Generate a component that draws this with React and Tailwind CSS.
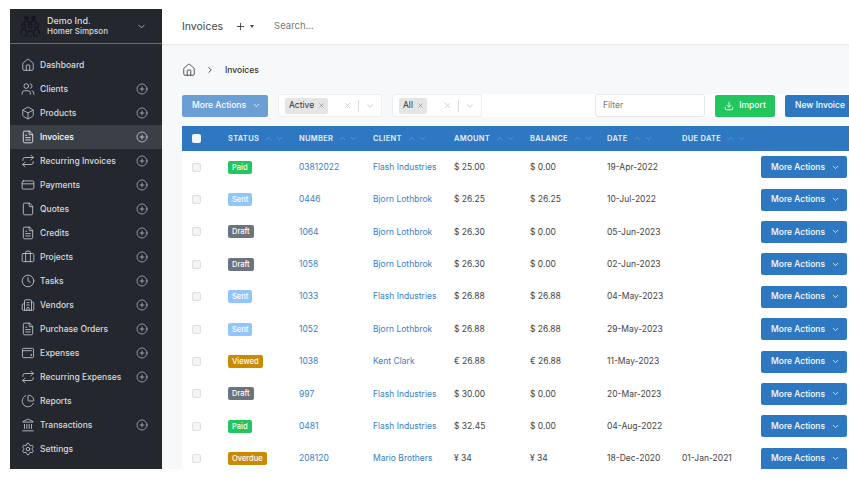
import React from "react";
import {
  House, Users, Box, FileText, Repeat, CreditCard, File, Briefcase, Clock, Building2,
  ChartPie, Landmark, Settings, CirclePlus, ChevronDown, ChevronUp, ChevronRight, Plus, X, Download,
} from "lucide-react";

function WalletIcon(props) {
  const { size, strokeWidth, className } = props;
  return (
    <svg width={size} height={size} viewBox="0 0 24 24" fill="none" stroke="currentColor" strokeWidth={strokeWidth} className={className}>
      <rect x="2.500" y="4" width="19" height="16" rx="2" />
      <path d="M2.500 8h16" />
      <circle cx="17.500" cy="15.500" r="0.8" fill="currentColor" />
    </svg>
  );
}

const NAV = [
  { label: "Dashboard", icon: House },
  { label: "Clients", icon: Users, add: true },
  { label: "Products", icon: Box, add: true },
  { label: "Invoices", icon: FileText, add: true, active: true },
  { label: "Recurring Invoices", icon: Repeat, add: true },
  { label: "Payments", icon: CreditCard, add: true },
  { label: "Quotes", icon: File, add: true },
  { label: "Credits", icon: FileText, add: true },
  { label: "Projects", icon: Briefcase, add: true },
  { label: "Tasks", icon: Clock, add: true },
  { label: "Vendors", icon: Building2, add: true },
  { label: "Purchase Orders", icon: FileText, add: true },
  { label: "Expenses", icon: WalletIcon, add: true },
  { label: "Recurring Expenses", icon: Repeat, add: true },
  { label: "Reports", icon: ChartPie },
  { label: "Transactions", icon: Landmark, add: true },
  { label: "Settings", icon: Settings },
];

const ROWS = [
  ["Paid", "03812022", "Flash Industries", "$ 25.00", "$ 0.00", "19-Apr-2022", ""],
  ["Sent", "0446", "Bjorn Lothbrok", "$ 26.25", "$ 26.25", "10-Jul-2022", ""],
  ["Draft", "1064", "Bjorn Lothbrok", "$ 26.30", "$ 0.00", "05-Jun-2023", ""],
  ["Draft", "1058", "Bjorn Lothbrok", "$ 26.30", "$ 0.00", "02-Jun-2023", ""],
  ["Sent", "1033", "Flash Industries", "$ 26.88", "$ 26.88", "04-May-2023", ""],
  ["Sent", "1052", "Bjorn Lothbrok", "$ 26.88", "$ 26.88", "29-May-2023", ""],
  ["Viewed", "1038", "Kent Clark", "€ 26.88", "€ 26.88", "11-May-2023", ""],
  ["Draft", "997", "Flash Industries", "$ 30.00", "$ 0.00", "20-Mar-2023", ""],
  ["Paid", "0481", "Flash Industries", "$ 32.45", "$ 0.00", "04-Aug-2022", ""],
  ["Overdue", "208120", "Mario Brothers", "¥ 34", "¥ 34", "18-Dec-2020", "01-Jan-2021"],
];

const STATUS = {
  Paid: "bg-[#22c55e]",
  Sent: "bg-[#93c5fd]",
  Draft: "bg-[#6b7280]",
  Viewed: "bg-[#ca8a04]",
  Overdue: "bg-[#ca8a04]",
};

const COLS = "grid grid-cols-[46px_71px_74px_81px_76px_77px_75px_79px_1fr] items-center";

function Logo() {
  return (
    <svg width="20" height="22" viewBox="0 0 20 22" fill="none" stroke="#15171a" className="shrink-0">
      <circle cx="6.500" cy="3" r="2" fill="#15171a" />
      <circle cx="13.500" cy="3" r="2" fill="#15171a" />
      <path d="M3.500 10c0-2.500 1.500-4 3-4s3 1.500 3.500 3c.5-1.500 2-3 3.500-3s3 1.500 3 4" strokeWidth="1.600" />
      <circle cx="3.500" cy="10.500" r="2" strokeWidth="1.200" />
      <circle cx="10" cy="11" r="2" strokeWidth="1.200" />
      <circle cx="16.500" cy="10.500" r="2" strokeWidth="1.200" />
      <path d="M.5 19c0-3 1.500-5 3-5s2.500 1 3 2.500M19.500 19c0-3-1.500-5-3-5s-2.500 1-3 2.500M6 21c0-3 2-5 4-5s4 2 4 5" strokeWidth="1.400" />
      <path d="M1 21h18" strokeWidth="1" strokeDasharray="2 1" />
    </svg>
  );
}

function Sidebar() {
  return (
    <aside className="w-[152px] shrink-0 bg-[#24272e] text-[#d9dbde] flex flex-col">
      <div className="h-[35px] shrink-0 flex items-center pl-[10px] pr-[15px] border-b border-[#6a6d72]">
        <Logo />
        <div className="ml-[7px] flex-1 text-[8px] leading-[10.500px] font-medium">
          <div className="text-[9px]">Demo Ind.</div>
          <div>Homer Simpson</div>
        </div>
        <ChevronDown size={11} strokeWidth={1.5} />
      </div>
      <nav className="mt-[9px]">
        {NAV.map(({ label, icon: Icon, add, active }) => (
          <div key={label} className={`h-[24px] flex items-center pl-[11px] pr-[14px] ${active ? "bg-[#3b4047] text-white" : ""}`}>
            <Icon size={14} strokeWidth={1.3} className="shrink-0" />
            <span className="ml-[5px] flex-1 text-[8.500px] font-medium whitespace-nowrap">{label}</span>
            {add && <CirclePlus size={12} strokeWidth={1.2} className="shrink-0" />}
          </div>
        ))}
      </nav>
    </aside>
  );
}

function MoreActions({ dim }) {
  return (
    <div className={`h-[22px] w-[86px] shrink-0 rounded-[2px] flex items-center pl-[10px] gap-[6px] text-white text-[8.500px] font-medium ${dim ? "bg-[#6c9ed6]" : "bg-[#2e78c2]"}`}>
      More Actions <ChevronDown size={9} />
    </div>
  );
}

function Pill({ label, width }) {
  return (
    <div className={`h-[23px] shrink-0 bg-white border border-[#eceef0] rounded-[3px] flex items-center pl-[6px] ${width}`}>
      <span className="h-[16px] pl-[4px] pr-[3px] bg-[#e5e5e5] rounded-[2px] flex items-center gap-[4px] text-[8.500px] text-[#333]">
        {label} <X size={7} className="text-[#777]" />
      </span>
      <span className="ml-auto flex items-center text-[#c4c4c4]">
        <X size={9} />
        <span className="mx-[6px] h-[12px] w-px bg-[#dcdcdc]" />
        <ChevronDown size={10} className="mr-[6px]" />
      </span>
    </div>
  );
}

function SortHead({ label }) {
  return (
    <div className="flex items-center gap-[2px] text-[7.500px] tracking-[0.3px] font-semibold text-[#e9f0f8] whitespace-nowrap">
      {label}
      <ChevronUp size={9} className="ml-[3px] text-[#6fa3da]" />
      <ChevronDown size={9} className="text-[#6fa3da]" />
    </div>
  );
}

export default function App() {
  return (
    <div className="w-[849px] h-[484px] overflow-hidden bg-white pl-[10px] pt-[9px] font-['Inter',sans-serif]">
      <div className="flex h-[460px]">
        <Sidebar />
        <main className="flex-1 min-w-0 bg-[#f7f8f9] flex flex-col overflow-hidden">
          <header className="h-[35px] shrink-0 bg-white flex items-center pl-[20px] shadow-[0_1px_2px_rgba(0,0,0,0.08)] text-[#444]">
            <span className="text-[10.500px]">Invoices</span>
            <Plus size={11} strokeWidth={2} className="ml-[12px]" />
            <span className="ml-[4px] border-x-[2.500px] border-t-[3px] border-x-transparent border-t-[#444]" />
            <span className="ml-[20px] text-[9.500px] text-[#777]">Search...</span>
          </header>
          <div className="pl-[20px] mt-[17px] h-[18px] shrink-0 flex items-center text-[#333]">
            <House size={14} strokeWidth={1.4} />
            <ChevronRight size={10} className="ml-[9px]" />
            <span className="ml-[10px] text-[8.500px] font-medium">Invoices</span>
          </div>
          <div className="pl-[20px] mt-[15px] h-[23px] shrink-0 flex items-center">
            <MoreActions dim />
            <Pill label="Active" width="w-[104px] ml-[10px]" />
            <Pill label="All" width="w-[90px] ml-[10px]" />
            <div className="h-[23px] flex-1 bg-white flex items-center pl-[113px]">
              <div className="h-[23px] w-[110px] shrink-0 border border-[#e5e7eb] rounded-[3px] px-[7px] flex items-center text-[8.500px] text-[#777] bg-white">Filter</div>
              <div className="ml-[10px] h-[22px] w-[60px] shrink-0 bg-[#22c55e] rounded-[2px] text-white text-[8.500px] font-medium flex items-center justify-center gap-[5px]">
                <Download size={10} /> Import
              </div>
              <div className="ml-[10px] h-[22px] w-[70px] shrink-0 bg-[#2e78c2] rounded-[2px] text-white text-[8.500px] font-medium flex items-center justify-center">New Invoice</div>
            </div>
          </div>
          <div className="ml-[20px] mt-[9px] bg-white flex-1 min-h-0 overflow-hidden">
            <div className={`${COLS} h-[25px] bg-[#2e78c2]`}>
              <span className="ml-[10px] w-[9px] h-[9px] rounded-[2px] bg-[#f1f5f9]" />
              {["STATUS", "NUMBER", "CLIENT", "AMOUNT", "BALANCE", "DATE", "DUE DATE"].map((h) => (
                <SortHead key={h} label={h} />
              ))}
            </div>
            {ROWS.map((r) => (
              <div key={r[1]} className={`${COLS} h-[32.400px] text-[8.500px] text-[#444]`}>
                <span className="ml-[10px] w-[9px] h-[9px] rounded-[2px] bg-[#f4f4f5] border border-[#e0e0e0]" />
                <span className={`justify-self-start h-[13px] px-[4px] rounded-[2px] flex items-center text-white text-[7.500px] font-medium ${STATUS[r[0]]}`}>{r[0]}</span>
                <span className="text-[#3a80c6]">{r[1]}</span>
                <span className="text-[#3a80c6] whitespace-nowrap">{r[2]}</span>
                <span>{r[3]}</span>
                <span>{r[4]}</span>
                <span>{r[5]}</span>
                <span className="whitespace-nowrap">{r[6]}</span>
                <MoreActions />
              </div>
            ))}
          </div>
        </main>
      </div>
    </div>
  );
}
